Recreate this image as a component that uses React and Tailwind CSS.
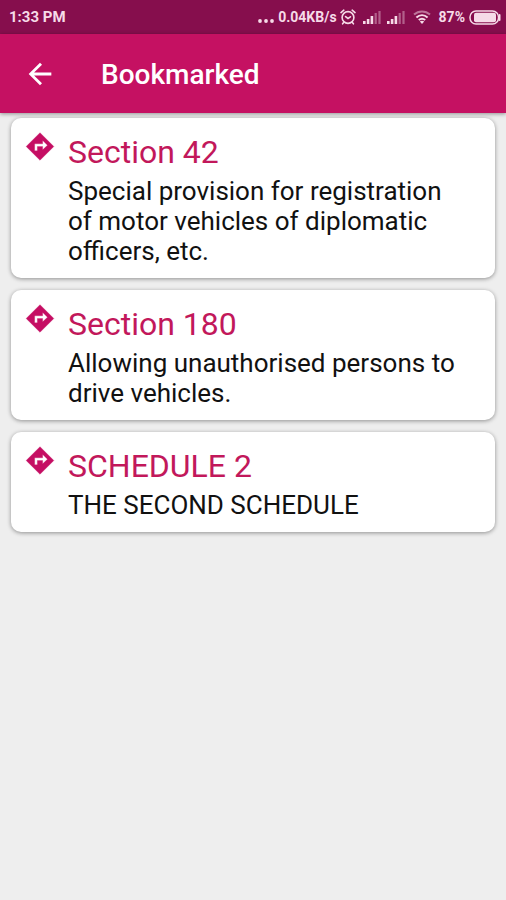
import React from 'react';
import { MdArrowBack } from 'react-icons/md';

const bookmarks = [
  {
    id: 1,
    title: 'Section 42',
    text: 'Special provision for registration of motor vehicles of diplomatic officers, etc.',
  },
  { id: 2, title: 'Section 180', text: 'Allowing unauthorised persons to drive vehicles.' },
  { id: 3, title: 'SCHEDULE 2', text: 'THE SECOND SCHEDULE' },
];

const DirectionIcon = () => (
  <svg width="32" height="33" viewBox="0 0 24 24" className="mt-3 shrink-0 text-[#c50e63]">
    <path
      fill="currentColor"
      fillRule="evenodd"
      d="M12 1.6 22.4 12 12 22.4 1.6 12zM14 14.5l3.6-3.5L14 7.5V10H8v5.2h2V12h4z"
      stroke="currentColor"
      strokeWidth="0.2"
      strokeLinejoin="round"
    />
  </svg>
);

const AlarmIcon = () => (
  <svg width="16" height="16" viewBox="0 0 16 16" fill="none" stroke="currentColor" strokeWidth="1.6" strokeLinecap="round">
    <circle cx="8" cy="8.5" r="5.9" />
    <path d="M1 3.6 3.8 1.2M15 3.6l-2.8-2.4M5.6 7.6 8 9.4l2.4-1.6M3.6 13.6l-1 1.2M12.4 13.6l1 1.2" />
  </svg>
);

const SignalIcon = () => (
  <svg width="18" height="13" viewBox="0 0 18 13" fill="currentColor">
    <rect x="0" y="10" width="2.6" height="3" />
    <rect x="3.8" y="8" width="2.6" height="5" />
    <rect x="7.6" y="5" width="2.6" height="8" />
    <rect x="11.6" y="2" width="2.2" height="11" opacity="0.4" />
    <rect x="15.4" y="0" width="2.2" height="13" opacity="0.4" />
  </svg>
);

const WifiIcon = () => (
  <svg width="18" height="14" viewBox="0 0 18 14" fill="none" stroke="currentColor" strokeWidth="2">
    <path d="M1 4.6C5.6.4 12.4.4 17 4.6" opacity="0.5" />
    <path d="M3.4 7.4c3.3-3 7.9-3 11.2 0" />
    <path d="M5.8 10.1c2-1.7 4.4-1.7 6.4 0" />
    <path d="M9 14l-2.2-2.5c1.4-1 3-1 4.4 0z" fill="currentColor" stroke="none" />
  </svg>
);

const BatteryIcon = () => (
  <svg width="32" height="15" viewBox="0 0 32 15" fill="none" stroke="currentColor">
    <rect x="1" y="1" width="28.5" height="13" rx="6" strokeWidth="1.5" />
    <rect x="5" y="2.8" width="22" height="9.4" rx="2" fill="currentColor" stroke="none" />
    <path d="M30.6 5v5" strokeWidth="1.8" strokeLinecap="round" />
  </svg>
);

const StatusBar = () => (
  <div className="flex h-[34px] items-center justify-between bg-[#860e4d] pl-[9px] pr-[5px] text-[15px] font-bold text-[#f6dbe8]">
    <span>1:33 PM</span>
    <div className="flex items-center">
      <svg width="16" height="14" viewBox="0 0 16 14" fill="currentColor" className="mr-1">
        <circle cx="2" cy="11" r="1.9" />
        <circle cx="8" cy="11" r="1.9" />
        <circle cx="14" cy="11" r="1.9" />
      </svg>
      <span className="mr-[3px] text-[14px]">0.04KB/s</span>
      <AlarmIcon />
      <div className="ml-[7px] mr-2 flex gap-[6px]">
        <SignalIcon />
        <SignalIcon />
      </div>
      <WifiIcon />
      <span className="ml-2 mr-1 text-[14px]">87%</span>
      <BatteryIcon />
    </div>
  </div>
);

const BookmarkCard = ({ title, text }) => (
  <li className="flex items-start rounded-[10px] bg-white pb-3 pl-[13px] pr-8 shadow-[0_1px_4px_rgba(0,0,0,0.4)]">
    <DirectionIcon />
    <div className="ml-3 min-w-0 pt-[15px]">
      <h2 className="text-[32px] leading-[38px] text-[#c2185b]">{title}</h2>
      <p className="mt-[5px] text-[26px] leading-[30px] text-[#111]">{text}</p>
    </div>
  </li>
);

const App = () => {
  return (
    <div className="min-h-screen bg-[#eeeeee] font-[Roboto,sans-serif]">
      <StatusBar />
      <header className="relative flex h-[79px] items-center bg-[#c51162] pl-[23px] text-white shadow-[0_1px_4px_rgba(0,0,0,0.4)]">
        <button type="button" aria-label="Back">
          <MdArrowBack size={34} />
        </button>
        <h1 className="ml-11 pt-0.5 text-[28px] font-medium">Bookmarked</h1>
      </header>
      <main>
        <ul className="flex flex-col gap-3 px-[11px] pt-[5px]">
          {bookmarks.map((item) => (
            <BookmarkCard key={item.id} title={item.title} text={item.text} />
          ))}
        </ul>
      </main>
    </div>
  );
};

export default App;
